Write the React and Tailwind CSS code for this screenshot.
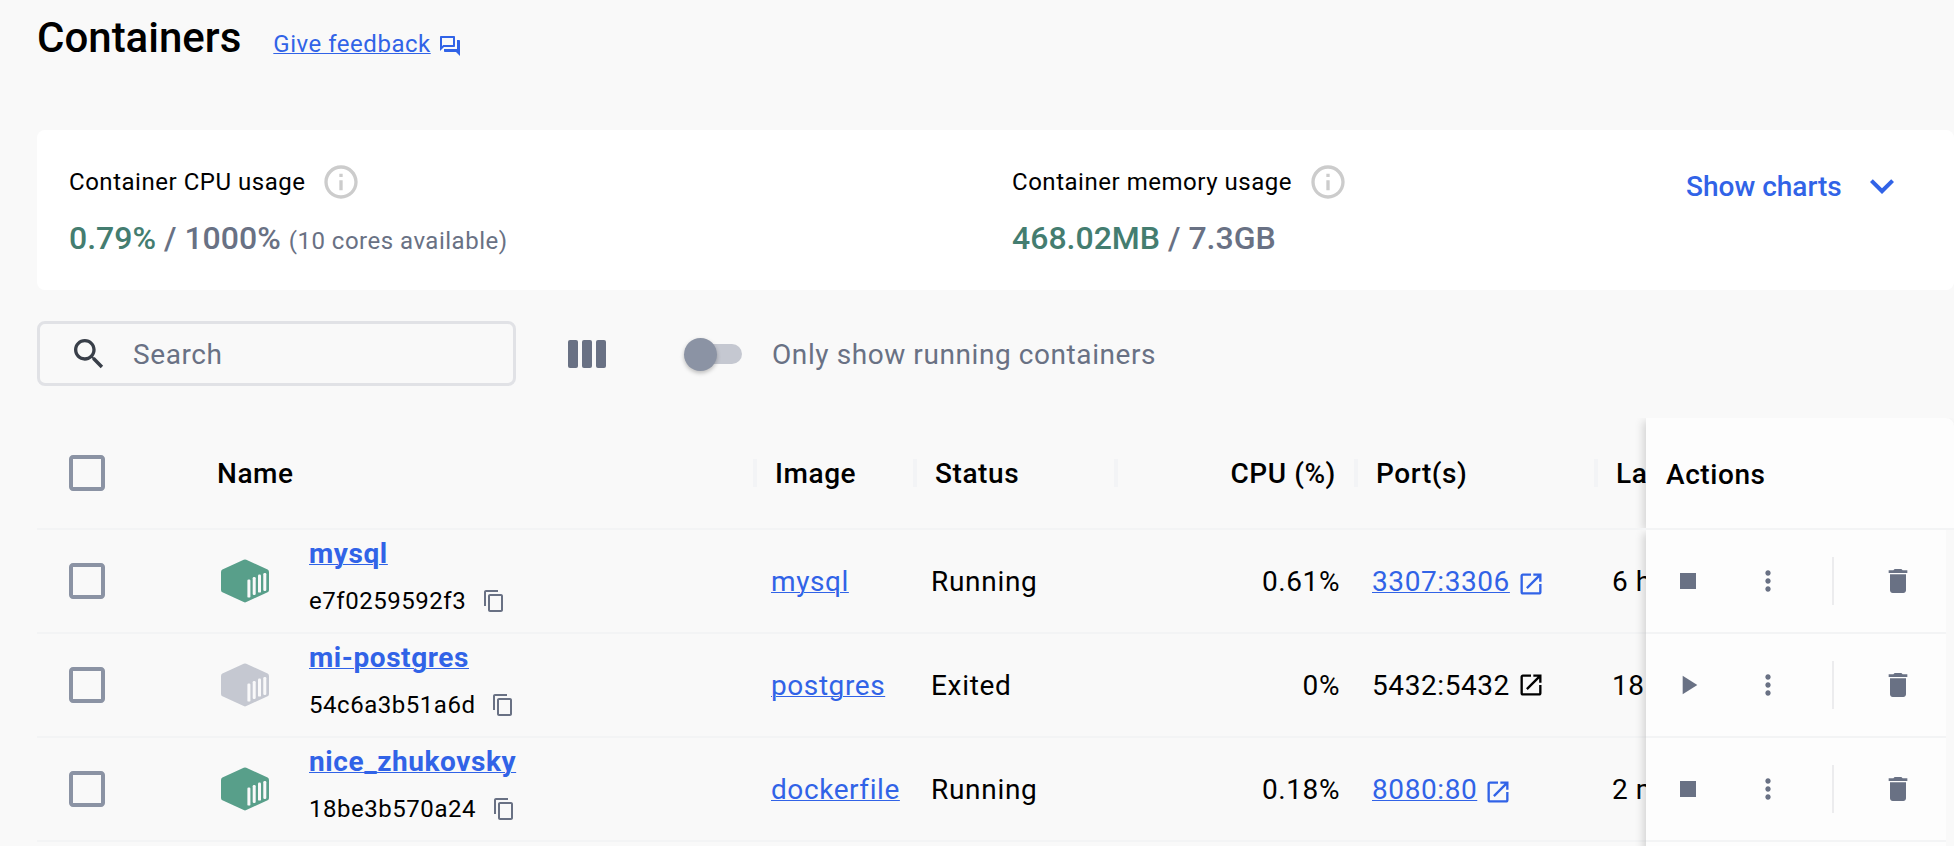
import React from "react";

const ICONS = {
  forum:
    "M15 4v7H5.17L4 12.17V4h11m1-2H3c-.55 0-1 .45-1 1v14l4-4h10c.55 0 1-.45 1-1V3c0-.55-.45-1-1-1zm5 4h-2v9H6v2c0 .55.45 1 1 1h11l4 4V7c0-.55-.45-1-1-1z",
  info: "M11 7h2v2h-2zm0 4h2v6h-2zm1-9C6.48 2 2 6.48 2 12s4.48 10 10 10 10-4.48 10-10S17.52 2 12 2zm0 18c-4.41 0-8-3.59-8-8s3.59-8 8-8 8 3.59 8 8-3.59 8-8 8z",
  chevron: "M7.41 8.59 12 13.17l4.59-4.58L18 10l-6 6-6-6z",
  search:
    "M15.5 14h-.79l-.28-.27C15.41 12.59 16 11.11 16 9.5 16 5.91 13.09 3 9.5 3S3 5.91 3 9.5 5.91 16 9.5 16c1.61 0 3.09-.59 4.23-1.57l.27.28v.79l5 4.99L20.49 19l-4.99-5zm-6 0C7.01 14 5 11.99 5 9.5S7.01 5 9.5 5 14 7.01 14 9.5 11.99 14 9.5 14z",
  checkbox:
    "M19 5v14H5V5h14m0-2H5c-1.1 0-2 .9-2 2v14c0 1.1.9 2 2 2h14c1.1 0 2-.9 2-2V5c0-1.1-.9-2-2-2z",
  copy: "M16 1H4c-1.1 0-2 .9-2 2v14h2V3h12V1zm3 4H8c-1.1 0-2 .9-2 2v14c0 1.1.9 2 2 2h11c1.1 0 2-.9 2-2V7c0-1.1-.9-2-2-2zm0 16H8V7h11v14z",
  open: "M19 19H5V5h7V3H5c-1.11 0-2 .9-2 2v14c0 1.1.89 2 2 2h14c1.1 0 2-.9 2-2v-7h-2v7zM14 3v2h3.59l-9.83 9.83 1.41 1.41L19 6.41V10h2V3h-7z",
  stop: "M6 6h12v12H6z",
  play: "M8 5v14l11-7z",
  more: "M12 8c1.1 0 2-.9 2-2s-.9-2-2-2-2 .9-2 2 .9 2 2 2zm0 2c-1.1 0-2 .9-2 2s.9 2 2 2 2-.9 2-2-.9-2-2-2zm0 6c-1.1 0-2 .9-2 2s.9 2 2 2 2-.9 2-2-.9-2-2-2z",
  trash: "M6 19c0 1.1.9 2 2 2h8c1.1 0 2-.9 2-2V7H6v12zM19 4h-3.5l-1-1h-5l-1 1H5v2h14V4z",
};

function Icon({ name, className }) {
  return (
    <svg viewBox="0 0 24 24" fill="currentColor" className={`block shrink-0 ${className}`} aria-hidden="true">
      <path d={ICONS[name]} />
    </svg>
  );
}

function ContainerIcon({ running }) {
  return (
    <svg viewBox="0 0 48 44" className={`block h-[44px] w-[48px] shrink-0 ${running ? "text-[#589f8a]" : "text-[#c5c8d1]"}`} aria-hidden="true">
      <path
        fill="currentColor"
        d="M22.7 .8Q24 .1 25.3 .8L46.6 10.6Q48 11.3 48 12.9V30.9Q48 32.5 46.6 33.2L25.3 43.1Q24 43.8 22.7 43.1L1.4 33.2Q0 32.5 0 30.9V12.9Q0 11.3 1.4 10.6Z"
      />
      <g fill="#f9f9fa">
        <rect x="26.4" y="20.6" width="3" height="18" rx="1.2" />
        <rect x="31.7" y="18" width="3" height="18" rx="1.2" />
        <rect x="37" y="15.6" width="3" height="18" rx="1.2" />
        <rect x="42.3" y="14" width="3" height="18" rx="1.2" />
      </g>
    </svg>
  );
}

function HeaderCell({ children, className }) {
  return (
    <div className={`relative flex h-full shrink-0 items-center pt-px text-[28px] font-medium ${className}`}>
      {children}
    </div>
  );
}

function Separator() {
  return <span className="absolute top-[41px] -left-[2px] h-[28px] w-[4px] bg-[#f3f4f6]" />;
}

const ROWS = [
  { name: "mysql", id: "e7f0259592f3", image: "mysql", status: "Running", cpu: "0.61%", port: "3307:3306", last: "6 hours ago", running: true },
  { name: "mi-postgres", id: "54c6a3b51a6d", image: "postgres", status: "Exited", cpu: "0%", port: "5432:5432", last: "18 hours ago", running: false },
  { name: "nice_zhukovsky", id: "18be3b570a24", image: "dockerfile", status: "Running", cpu: "0.18%", port: "8080:80", last: "2 minutes ago", running: true },
];

const LINK = "text-[#3163e7] underline decoration-1 underline-offset-[1px]";

function Row({ row }) {
  return (
    <div className="flex h-[104px] border-b-2 border-[#f3f4f5] text-[28px]">
      <div className="flex w-[164px] shrink-0 items-center pl-[26px]">
        <Icon name="checkbox" className="size-[48px] text-[#8b93a4]" />
      </div>
      <div className="flex w-[554px] shrink-0 items-center pl-[20px]">
        <ContainerIcon running={row.running} />
        <div className="ml-[40px] flex h-full flex-col">
          <a className={`mt-[7px] self-start leading-[34px] font-bold ${LINK}`}>{row.name}</a>
          <div className="mt-[15px] flex items-center text-[24px] leading-[30px] tracking-[0.53px]">
            {row.id}
            <Icon name="copy" className="ml-[16px] size-[24px] text-[#697184]" />
          </div>
        </div>
      </div>
      <div className="flex w-[160px] shrink-0 items-center pt-[2px] pl-[16px]">
        <a className={LINK}>{row.image}</a>
      </div>
      <div className="flex w-[201px] shrink-0 items-center pt-[2px] pl-[16px] tracking-[0.7px]">{row.status}</div>
      <div className="flex w-[240px] shrink-0 items-center justify-end pt-[2px] pr-[16px]">{row.cpu}</div>
      <div className="flex w-[240px] shrink-0 items-center pt-[2px] pl-[16px]">
        <a className={row.running ? LINK : ""}>{row.port}</a>
        <Icon name="open" className={`ml-[7px] size-[28px] ${row.running ? "mt-[4px] text-[#3163e7]" : "mb-[2px] text-black"}`} />
      </div>
      <div className="flex shrink-0 items-center pt-[2px] pl-[16px] whitespace-nowrap">{row.last}</div>
    </div>
  );
}

function Actions({ running }) {
  return (
    <div className="flex h-[104px] items-center border-b-2 border-[#f3f4f5] text-[#697184]">
      <Icon name={running ? "stop" : "play"} className="ml-[26px] size-[32px]" />
      <Icon name="more" className="ml-[48px] size-[32px]" />
      <span className="ml-[48px] h-[48px] w-[2px] bg-[#ececee]" />
      <Icon name="trash" className="ml-[48px] size-[32px]" />
    </div>
  );
}

export default function App() {
  return (
    <div className="h-[846px] w-[1954px] overflow-hidden bg-[#f9f9f9] pl-[37px] font-['Roboto',sans-serif] tracking-[0.58px] text-black">
      <header className="flex h-[130px]">
        <h1 className="mt-[13px] text-[42px] leading-[50px] font-medium tracking-normal">Containers</h1>
        <a className={`mt-[29px] ml-[32px] text-[24px] leading-[30px] tracking-[0.52px] ${LINK}`}>Give feedback</a>
        <Icon name="forum" className="mt-[34px] ml-[7px] size-[24px] text-[#3163e7]" />
      </header>

      <section className="flex h-[160px] rounded-lg bg-white">
        <div className="w-[943px] pt-[32px] pl-[32px]">
          <div className="flex h-[40px] items-center text-[24px] tracking-[0.53px]">
            Container CPU usage
            <Icon name="info" className="ml-[15px] size-[40px] text-[#cccccc]" />
          </div>
          <div className="mt-[16px] text-[32px] leading-[40px] font-medium tracking-normal text-[#697184]">
            <span className="text-[#447d70]">0.79%</span> / 1000%{" "}
            <span className="text-[24px] font-normal tracking-[0.5px]">(10 cores available)</span>
          </div>
        </div>
        <div className="w-[674px] pt-[32px] pl-[32px]">
          <div className="flex h-[40px] items-center text-[24px] tracking-[0.53px]">
            Container memory usage
            <Icon name="info" className="ml-[16px] size-[40px] text-[#cccccc]" />
          </div>
          <div className="mt-[16px] text-[32px] leading-[40px] font-medium tracking-normal text-[#697184]">
            <span className="text-[#447d70]">468.02MB</span> / 7.3GB
          </div>
        </div>
        <div className="flex h-[112px] items-center text-[28px] font-medium tracking-normal text-[#3163e7]">
          <span className="ml-[32px] pt-[2px]">Show charts</span>
          <Icon name="chevron" className="ml-[16px] size-[48px]" />
        </div>
      </section>

      <section className="flex h-[128px] items-center text-[28px] text-[#697184]">
        <div className="mb-[2px] flex h-[65px] w-[479px] items-center rounded-lg border-3 border-[#e1e2e6] pl-[29px]">
          <Icon name="search" className="mt-[2px] size-[40px] text-[#393f49]" />
          <span className="ml-[24px] pt-[3px]">Search</span>
        </div>
        <div className="ml-[52px] flex gap-[4px]">
          <span className="h-[28px] w-[10px] rounded-[2px] bg-[#697184]" />
          <span className="h-[28px] w-[10px] rounded-[2px] bg-[#697184]" />
          <span className="h-[28px] w-[10px] rounded-[2px] bg-[#697184]" />
        </div>
        <div className="ml-[80px] flex h-[20px] w-[56px] items-center rounded-full bg-[#c5c8d1]">
          <span className="-ml-[2px] size-[33px] shrink-0 rounded-full bg-[#8b93a4] shadow-[0_2px_4px_rgba(0,0,0,0.25)]" />
        </div>
        <span className="ml-[30px] pt-[2px]">Only show running containers</span>
      </section>

      <section className="flex">
        <div className="w-[1609px] overflow-hidden">
          <div className="flex h-[112px] border-b-2 border-[#f3f4f5]">
            <div className="flex w-[164px] shrink-0 items-center pl-[26px]">
              <Icon name="checkbox" className="size-[48px] text-[#8b93a4]" />
            </div>
            <HeaderCell className="w-[554px] pl-[16px]">Name</HeaderCell>
            <HeaderCell className="w-[160px] pl-[20px]"><Separator />Image</HeaderCell>
            <HeaderCell className="w-[201px] pl-[20px]"><Separator />Status</HeaderCell>
            <HeaderCell className="w-[240px] justify-end pr-[20px]"><Separator />CPU (%)</HeaderCell>
            <HeaderCell className="w-[240px] pl-[20px]"><Separator />Port(s)</HeaderCell>
            <HeaderCell className="pl-[20px] whitespace-nowrap"><Separator />Last started</HeaderCell>
          </div>
          {ROWS.map((row) => (
            <Row key={row.name} row={row} />
          ))}
        </div>
        <div className="z-10 w-[308px] shrink-0">
          <div className="flex h-[110px] items-center rounded-tr-lg bg-[#fdfdfd] pt-[3px] pl-[20px] text-[28px] font-medium shadow-[-3px_3px_8px_rgba(0,0,0,0.15)] [clip-path:inset(0_0_0_-12px)]">
            Actions
          </div>
          <div className="h-[2px] bg-[#f3f4f5]" />
          <div className="h-[330px] w-[300px] bg-[#fdfdfd] shadow-[-3px_3px_8px_rgba(0,0,0,0.15)] [clip-path:inset(0_0_0_-12px)]">
            {ROWS.map((row) => (
              <Actions key={row.name} running={row.running} />
            ))}
          </div>
        </div>
      </section>
    </div>
  );
}
